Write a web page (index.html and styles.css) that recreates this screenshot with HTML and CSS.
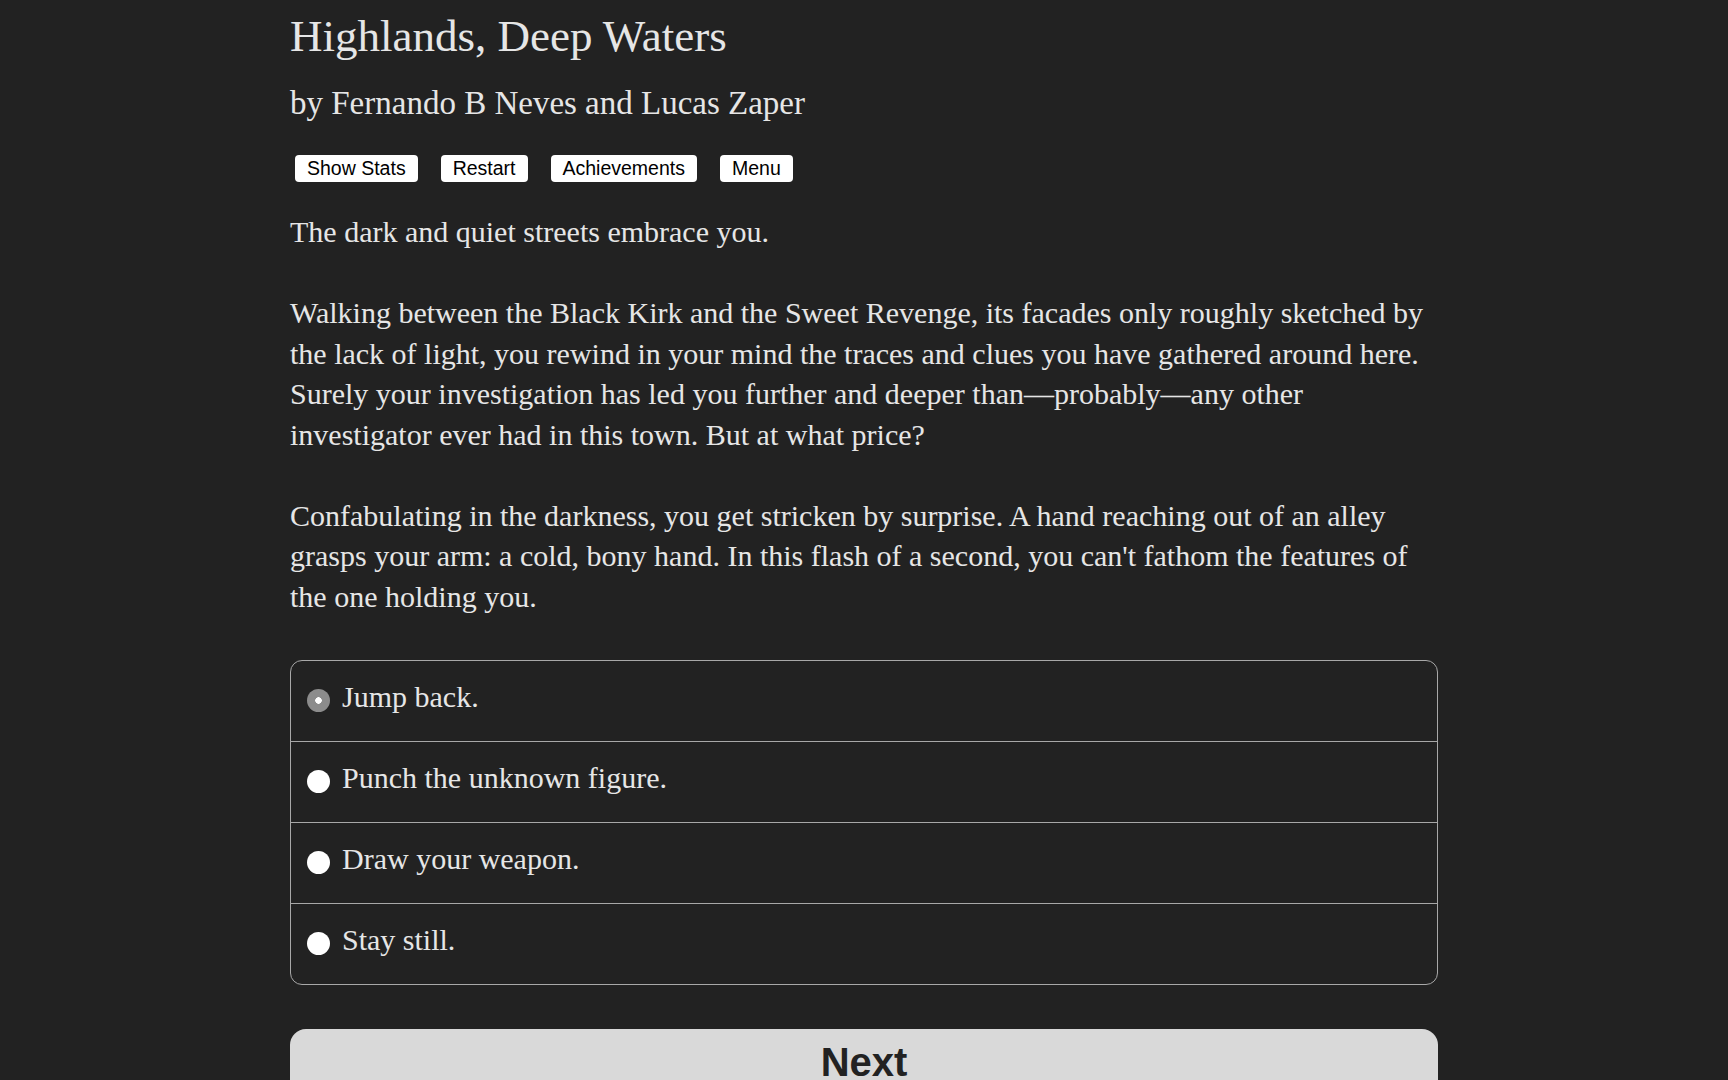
FILE: index.html
```html
<!DOCTYPE html>
<html lang="en">
<head>
  <meta charset="UTF-8" />
  <meta name="viewport" content="width=device-width, initial-scale=1.0">
  <title>Highlands, Deep Waters</title>
  <link rel="stylesheet" href="styles.css">
</head>
<body>
  <div class="container">
    <h1 class="title">Highlands, Deep Waters</h1>
    <h2 class="author">by Fernando B Neves and Lucas Zaper</h2>

    <div class="buttons">
      <button class="top-btn">Show Stats</button>
      <button class="top-btn">Restart</button>
      <button class="top-btn">Achievements</button>
      <button class="top-btn">Menu</button>
    </div>

    <div class="story">
      <p>The dark and quiet streets embrace you.</p>
      <p>Walking between the Black Kirk and the Sweet Revenge, its facades only roughly sketched by the lack of light, you rewind in your mind the traces and clues you have gathered around here. Surely your investigation has led you further and deeper than&mdash;probably&mdash;any other investigator ever had in this town. But at what price?</p>
      <p>Confabulating in the darkness, you get stricken by surprise. A hand reaching out of an alley grasps your arm: a cold, bony hand. In this flash of a second, you can't fathom the features of the one holding you.</p>
    </div>

    <form class="choice-form">
      <div class="choices">
        <label class="choice"><input type="radio" name="choice" checked> Jump back.</label>
        <label class="choice"><input type="radio" name="choice"> Punch the unknown figure.</label>
        <label class="choice"><input type="radio" name="choice"> Draw your weapon.</label>
        <label class="choice"><input type="radio" name="choice"> Stay still.</label>
      </div>
      <button type="button" class="next">Next</button>
    </form>
  </div>
</body>
</html>
```

FILE: styles.css
```css
body {
  margin: 0;
  background: #222222;
  color: #e6e6e6;
  font-family: "Palatino Linotype", "Book Antiqua", Palatino, "Liberation Serif", serif;
}

.container {
  width: 1148px;
  margin: 0 auto;
  padding-top: 10px;
}

.title {
  margin: 0;
  font-size: 45px;
  font-weight: normal;
  line-height: 52px;
}

.author {
  margin: 18px 0 0;
  font-size: 33px;
  font-weight: normal;
  line-height: 46px;
}

.buttons {
  display: flex;
  gap: 23px;
  margin: 29px 0 0 5px;
}

.top-btn {
  background: #ffffff;
  color: #000000;
  border: none;
  border-radius: 4px;
  font-family: "Liberation Sans", Arial, sans-serif;
  font-size: 19.5px;
  line-height: 23px;
  padding: 2px 12px;
  cursor: pointer;
}

.story {
  margin-top: 30px;
  font-size: 30px;
  line-height: 40.5px;
}

.story p {
  margin: 0 0 40.5px;
}

.choices {
  margin-top: 43px;
  border: 1px solid #a8a8a8;
  border-radius: 12px;
}

.choice {
  display: flex;
  align-items: center;
  gap: 12px;
  box-sizing: border-box;
  height: 80px;
  padding: 0 0 8px 16px;
  font-size: 30px;
  cursor: pointer;
}

.choice + .choice {
  height: 81px;
  border-top: 1px solid #a8a8a8;
}

.choice input {
  appearance: none;
  -webkit-appearance: none;
  width: 23px;
  height: 23px;
  margin: 6px 0 0;
  border-radius: 50%;
  background: #ffffff;
  flex-shrink: 0;
}

.choice input:checked {
  background: radial-gradient(circle, #ffffff 0 3px, #8c8c8c 3.5px);
}

.next {
  display: block;
  width: 100%;
  margin-top: 44px;
  padding: 10px 0 30px;
  background: #d9d9d9;
  color: #222222;
  border: none;
  border-radius: 16px;
  font-family: "Liberation Sans", Arial, sans-serif;
  font-weight: bold;
  font-size: 40px;
  line-height: 46px;
  cursor: pointer;
}
```
